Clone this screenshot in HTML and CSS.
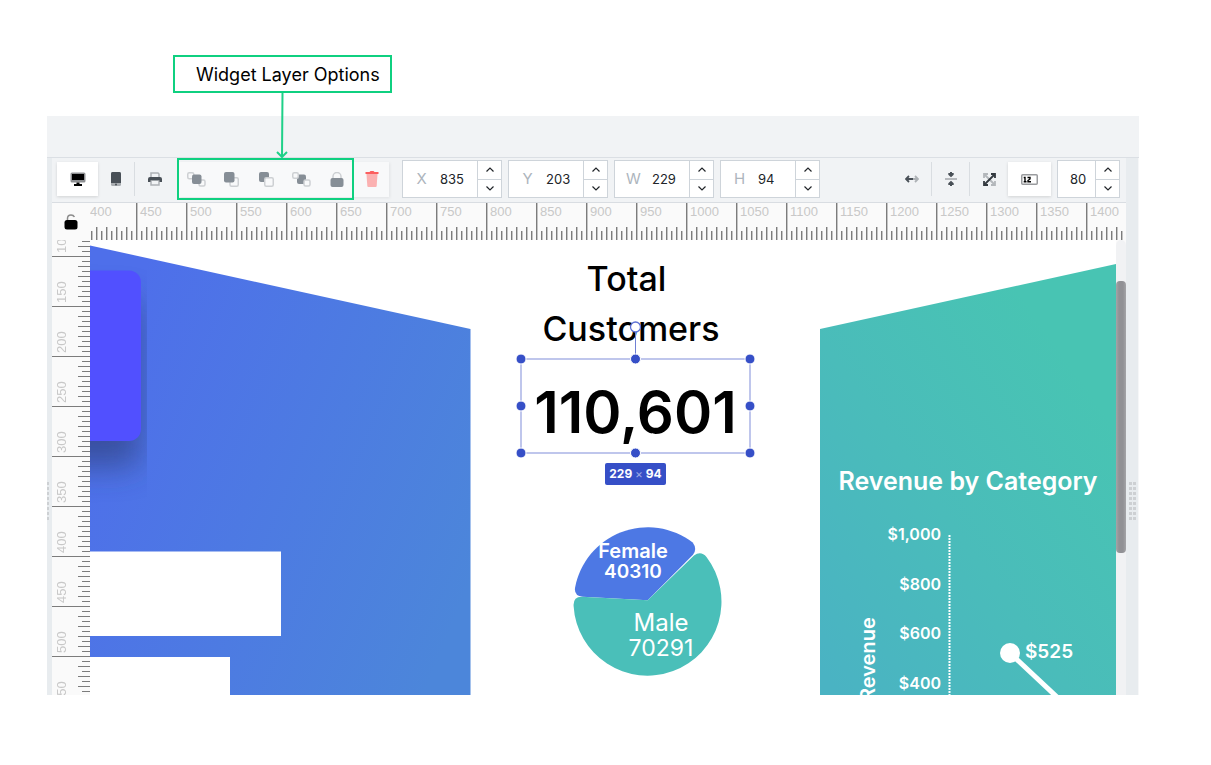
FILE: index.html
```html
<!DOCTYPE html>
<html lang="en">
<head>
<meta charset="utf-8">
<title>Dashboard designer</title>
<link rel="stylesheet" href="styles.css">
</head>
<body>
<header class="note"><p class="note-label">Widget Layer Options</p></header>
<main class="app">
  <svg class="note-arrow" width="12" height="65" viewBox="0 0 12 65" aria-hidden="true"><path d="M6.500 0 6 64M1 59l5 5 5-5"/></svg>
  <div class="band"></div>
  <div class="body">
    <div class="gutter gutter-left"><span class="grip"></span></div>
    <section class="editor">
      <div class="toolbar">
        <button class="tool active" aria-label="Desktop"><svg width="16" height="14" viewBox="0 0 16 14"><rect x=".5" y=".5" width="15" height="10" rx="1.500" fill="#8e9093"/><path d="M2 2h12v6H2zM6.500 10.500h3v1.500H12V14H4v-2h2.500z" fill="#000"/></svg></button>
        <button class="tool phone" aria-label="Phone"><svg width="10" height="14" viewBox="0 0 10 14"><rect width="10" height="14" rx="1.500" fill="#a9adb1"/><path d="M0 1.500Q0 0 1.500 0h7Q10 0 10 1.500V11H0z" fill="#495057"/><circle cx="5" cy="12.500" r="1" fill="#495057"/></svg></button>
        <span class="rule"></span>
        <button class="tool print" aria-label="Print"><svg width="14" height="14" viewBox="0 0 14 14"><path d="M3 5V1h7l1 1v3M3 9v4h8V9" fill="none" stroke="#adb1b5" stroke-width="1.500"/><path d="M2 5h10q2 0 2 2v3h-2.500V8.500h-9V10H0V7q0-2 2-2z" fill="#495057"/></svg></button>
        <div class="layers">
          <button aria-label="Bring to front"><svg width="19" height="15" viewBox="0 0 19 15"><rect class="o" x=".75" y=".75" width="6" height="6" rx="1.500"/><rect class="o" x="12" y="8" width="6" height="6" rx="1.500"/><rect class="s" x="5" y="2.500" width="9.500" height="9.500" rx="2"/></svg></button>
          <button aria-label="Bring forward"><svg width="15" height="15" viewBox="0 0 15 15"><rect class="o" x="6" y="5.750" width="8.250" height="8.500" rx="1.500"/><rect class="s" width="10.500" height="10.500" rx="2"/></svg></button>
          <button aria-label="Send backward"><svg width="15" height="15" viewBox="0 0 15 15"><rect class="s" width="10" height="10" rx="2"/><rect class="o f" x="5.750" y="5.750" width="8.500" height="8.500" rx="1.500"/></svg></button>
          <button aria-label="Send to back"><svg width="19" height="15" viewBox="0 0 19 15"><rect class="s" x="5" y="2.500" width="9" height="9.500" rx="2"/><rect class="o f" x=".75" y=".75" width="5.500" height="5.500" rx="1.500"/><rect class="o f" x="12" y="8" width="6" height="6" rx="1.500"/></svg></button>
          <button aria-label="Lock"><svg width="14" height="15" viewBox="0 0 14 15"><path class="o" d="M3 7V4.500a4 4 0 0 1 8 0V7"/><rect class="s" x=".5" y="6" width="13" height="9" rx="2"/></svg></button>
          <button aria-label="Delete"><svg width="14" height="16" viewBox="0 0 14 16"><path d="M1.500 3h11l-.8 12q-.1 1-1 1H3.300q-.9 0-1-1z" fill="#fbb1b1"/><path d="M.5 1h4l1-1h3l1 1h4v2H.5z" fill="#fb5f5f"/></svg></button>
          <span class="highlight"></span>
        </div>
        <div class="fields">
          <div class="field"><label for="fx">X</label><input id="fx" value="835"><span class="steps"><button aria-label="X up"><svg viewBox="0 0 8 5"><path d="M.5 4.500 4 1l3.500 3.500"/></svg></button><button aria-label="X down"><svg viewBox="0 0 8 5"><path d="M.5.500 4 4 7.500.500"/></svg></button></span></div>
          <div class="field"><label for="fy">Y</label><input id="fy" value="203"><span class="steps"><button aria-label="Y up"><svg viewBox="0 0 8 5"><path d="M.5 4.500 4 1l3.500 3.500"/></svg></button><button aria-label="Y down"><svg viewBox="0 0 8 5"><path d="M.5.500 4 4 7.500.500"/></svg></button></span></div>
          <div class="field"><label for="fw">W</label><input id="fw" value="229"><span class="steps"><button aria-label="Width up"><svg viewBox="0 0 8 5"><path d="M.5 4.500 4 1l3.500 3.500"/></svg></button><button aria-label="Width down"><svg viewBox="0 0 8 5"><path d="M.5.500 4 4 7.500.500"/></svg></button></span></div>
          <div class="field"><label for="fh">H</label><input id="fh" value="94"><span class="steps"><button aria-label="Height up"><svg viewBox="0 0 8 5"><path d="M.5 4.500 4 1l3.500 3.500"/></svg></button><button aria-label="Height down"><svg viewBox="0 0 8 5"><path d="M.5.500 4 4 7.500.500"/></svg></button></span></div>
        </div>
        <div class="view">
          <button class="tool" aria-label="Fit width"><svg width="14" height="8" viewBox="0 0 14 8" fill="none" stroke-width="1.800"><path d="M7 4h6M10 1l3 3-3 3" stroke="#adb1b5"/><path d="M8 4H1M4 1 1 4l3 3" stroke="#495057"/></svg></button>
          <span class="rule"></span>
          <button class="tool narrow" aria-label="Fit height"><svg width="12" height="14" viewBox="0 0 12 14"><path d="M0 7h12" stroke="#a2a6aa" stroke-width="1.500"/><path d="M5 0h2v1h1.700v1.700L6 5.200 3.300 2.700V1H5zM5 14h2v-1h1.700v-1.700L6 8.800l-2.700 2.500V13H5z" fill="#495057"/></svg></button>
          <span class="rule"></span>
          <button class="tool" aria-label="Fit page"><svg width="13" height="13" viewBox="0 0 13 13" fill="none" stroke-width="1.800"><path d="M1 5V1h4M1 1l11 11M12 8v4H8" stroke="#b3b7bb"/><path d="M8 1h4v4M12 1 1 12M1 8v4h4" stroke="#343a40"/></svg></button>
          <button class="tool active" aria-label="Rulers"><svg width="17" height="11" viewBox="0 0 17 11"><rect x=".75" y=".75" width="15.500" height="9.500" rx="1" fill="#fff" stroke="#999b9e" stroke-width="1.500"/><path d="M2.700 3.500H4V8M2.700 7.800h2.800M6.500 3.500h2.500v1.500L7 6.500v1.300h3" fill="none" stroke="#000" stroke-width="1.400"/></svg></button>
          <div class="field zoom"><input id="fz" value="80" aria-label="Zoom"><span class="steps"><button aria-label="Zoom in"><svg viewBox="0 0 8 5"><path d="M.5 4.500 4 1l3.500 3.500"/></svg></button><button aria-label="Zoom out"><svg viewBox="0 0 8 5"><path d="M.5.500 4 4 7.500.500"/></svg></button></span></div>
        </div>
      </div>
      <div class="workspace">
        <button class="corner" aria-label="Lock guides"><svg width="14" height="16" viewBox="0 0 14 16"><path d="M3.500 7V4.500q0-3.500 3.500-3.500 2.500 0 3.400 2" fill="none" stroke="#8c8c8c" stroke-width="1.500"/><rect x=".5" y="6" width="13" height="9.500" rx="2.500"/></svg></button>
        <div class="ruler-x"><span>400</span><span>450</span><span>500</span><span>550</span><span>600</span><span>650</span><span>700</span><span>750</span><span>800</span><span>850</span><span>900</span><span>950</span><span>1000</span><span>1050</span><span>1100</span><span>1150</span><span>1200</span><span>1250</span><span>1300</span><span>1350</span><span>1400</span></div>
        <div class="ruler-y"><span>100</span><span>150</span><span>200</span><span>250</span><span>300</span><span>350</span><span>400</span><span>450</span><span>500</span><span>550</span></div>
        <div class="stage">
          <svg class="art" width="1026" height="455" viewBox="90 240 1026 455">
            <defs>
              <linearGradient id="blue" gradientUnits="userSpaceOnUse" x1="90" y1="400" x2="480" y2="560"><stop offset="0" stop-color="#4e6fea"/><stop offset="1" stop-color="#4c86da"/></linearGradient>
              <linearGradient id="teal" gradientUnits="userSpaceOnUse" x1="800" y1="640" x2="1110" y2="420"><stop offset="0" stop-color="#4ab3c3"/><stop offset=".5" stop-color="#4abcba"/><stop offset="1" stop-color="#48c4b3"/></linearGradient>
              <filter id="soft" x="-50%" y="-30%" width="200%" height="170%"><feGaussianBlur stdDeviation="16"/></filter>
              <clipPath id="card"><path d="M90 262h57v270H90z"/></clipPath>
            </defs>
            <path fill="url(#blue)" d="M90 245.500 470.500 329v366H90z"/>
            <path fill="url(#teal)" d="M820 329 1116 264v431H820z"/>
            <g clip-path="url(#card)"><rect x="40" y="300" width="100" height="167" rx="12" fill="#2c3a70" opacity=".6" filter="url(#soft)"/><rect x="40" y="270.500" width="101" height="170.500" rx="12" fill="#5150ff"/></g>
            <path fill="#fff" d="M90 551.500h191V636H90zM90 657h140v38H90z"/>
            <path fill="#4d78e4" d="M647.700 600.300 693 554.800q4.500-6-.3-12.400A74 74 0 0 0 575 588q-1 8 7.700 8.800z"/>
            <path fill="#4abfb9" d="M647.700 600.300 694 555.500q7-5 12.500 1.500A74 74 0 1 1 573.600 606q-.6-9 8-9.200z"/>
            <g class="chart-text">
              <g class="semi" text-anchor="middle"><text x="633" y="558" font-size="20">Female</text><text x="633" y="578" font-size="19">40310</text></g>
              <g text-anchor="middle"><text x="661" y="631" font-size="24">Male</text><text x="661" y="656" font-size="23">70291</text></g>
              <text class="semi" x="968" y="490" font-size="25" text-anchor="middle">Revenue by Category</text>
              <g class="semi" font-size="16" text-anchor="end"><text x="941" y="540">$1,000</text><text x="941" y="590">$800</text><text x="941" y="639">$600</text><text x="941" y="689">$400</text></g>
              <text class="semi" font-size="20" transform="translate(875 701) rotate(-90)">Revenue</text>
              <text class="semi" x="1025" y="658" font-size="19">$525</text>
            </g>
            <path d="M949.500 535v160" stroke="#fff" stroke-width="2" stroke-dasharray="2 1"/>
            <path d="M1010 653 1058 698" stroke="#fff" stroke-width="5"/><circle cx="1010" cy="653" r="10" fill="#fff"/>
          </svg>
          <h1 class="title">Total&nbsp;<br>Customers</h1>
          <div class="selection">
            <strong class="value">110,601</strong>
            <svg class="handles" width="241" height="139" viewBox="515 320 241 139" aria-hidden="true">
              <path d="M521 359h229v94H521z" fill="none" stroke="#aab4e6" stroke-width="1.500"/>
              <path d="M635.500 332v27" stroke="#6f80d4"/>
              <circle cx="635.500" cy="327" r="5" fill="#fff" stroke="#5b6fd6" stroke-width="1.300"/>
              <g fill="#364fc7" stroke="#fff"><circle cx="521" cy="359" r="5"/><circle cx="635.500" cy="359" r="5"/><circle cx="750" cy="359" r="5"/><circle cx="521" cy="406" r="5"/><circle cx="750" cy="406" r="5"/><circle cx="521" cy="453" r="5"/><circle cx="635.500" cy="453" r="5"/><circle cx="750" cy="453" r="5"/></g>
            </svg>
            <span class="size">229 <i>×</i> 94</span>
          </div>
        </div>
        <div class="scroll"><span class="thumb"></span></div>
      </div>
    </section>
    <div class="gutter gutter-right"><span class="grip"></span></div>
  </div>
</main>
</body>
</html>
```
FILE: styles.css
```css
* { box-sizing: border-box; }
body { margin: 0; background: #fff; font-family: Inter, "Liberation Sans", sans-serif; }
button { border: 0; padding: 0; background: none; display: flex; align-items: center; justify-content: center; }
svg { display: block; }

.note { padding: 55px 0 23px 173px; }
.note-label { margin: 0; width: 219px; height: 38px; padding-left: 21px; border: 2px solid #0fd080; font-size: 18px; line-height: 35px; white-space: nowrap; }
.note-arrow { position: absolute; left: 229px; top: -23px; z-index: 2; fill: none; stroke: #1fd088; stroke-width: 2; }

.app { position: relative; margin: 0 72px 0 47px; background: #f1f3f5; }
.band { height: 42px; border-bottom: 1px solid #dbdfe4; }
.body { display: flex; }
.gutter { background: #e8ecef; display: flex; align-items: center; padding-top: 149px; }
.gutter-left { width: 5px; }
.gutter-right { width: 13px; border-right: 1px solid #f6f7f8; justify-content: center; }
.grip { width: 7px; height: 39px; background: conic-gradient(from 270deg at 3px 3px, #cdd0d3 90deg, transparent 0) 0 0 / 4px 5px; }
.gutter-left .grip { width: 2px; }
.editor { flex: 1; min-width: 0; }

.toolbar { display: flex; align-items: center; height: 45px; padding: 0 6px 2px 5px; border-bottom: 1px solid #d9dde2; }
.tool { width: 38px; height: 34px; }
.tool.active { width: 41px; background: #fff; box-shadow: 0 1px 3px #0002; }
.tool.phone { width: 36px; }
.tool.print { width: 39px; }
.tool.narrow { width: 37px; }
.rule { width: 1px; height: 34px; background: #d9dde1; }
.layers { position: relative; display: flex; height: 35px; margin-left: 5px; background: #f8f9fa; box-shadow: 1px 1px 3px #0001; }
.layers button { width: 35px; }
.layers .o { fill: none; stroke: #cdd0d3; stroke-width: 1.5px; }
.layers .o.f { fill: #f8f9fa; }
.layers .s { fill: #868e96; }
.highlight { position: absolute; left: -2px; top: -4px; width: 177px; height: 42px; border: 2px solid #0fd080; pointer-events: none; }

.fields { display: flex; gap: 6px; margin-left: 13px; }
.field { display: flex; width: 100px; height: 38px; border: 1px solid #ced4da; background: #fff; }
.field label { width: 37px; text-align: center; font-size: 15px; line-height: 36px; color: #adb5bd; }
.field input { flex: 1; width: 0; min-width: 0; border: 0; padding: 0; font: 13px Inter, sans-serif; color: #212529; background: none; }
.steps { width: 24px; display: flex; flex-direction: column; border-left: 1px solid #ced4da; }
.steps button { flex: 1; }
.steps button + button { border-top: 1px solid #ced4da; }
.steps svg { width: 8px; height: 5px; fill: none; stroke: #212529; stroke-width: 1.2px; }
.view { display: flex; align-items: center; margin-left: auto; }
.field.zoom { width: 63px; margin-left: 6px; }
.field.zoom input { padding-left: 12px; }
.view .active { width: 43px; }

.workspace { display: grid; grid-template-columns: 38px 1fr 10px; grid-template-rows: 37px minmax(455px, auto); background: #fafafa; color: #c8c8c8; font: 13px "Liberation Sans", Arial, sans-serif; }
.ruler-x { grid-column: 2 / 4; display: flex; overflow: hidden; background:
  linear-gradient(90deg, #7c7c7c 1px, #c4c4c4 1px 2px, transparent 2px) -4px 0 / 50px 100% repeat-x,
  linear-gradient(90deg, #7c7c7c 1px, #c4c4c4 1px 2px, transparent 2px) -4px 100% / 10px 13px repeat-x,
  linear-gradient(90deg, #7c7c7c 1px, #c4c4c4 1px 2px, transparent 2px) -4px 100% / 5px 9px repeat-x; }
.ruler-x span { flex: 0 0 50px; line-height: 17px; }
.ruler-y { height: 455px; display: flex; flex-direction: column; overflow: hidden; background:
  linear-gradient(#7c7c7c 1px, transparent 1px) 0 16px / 100% 50px repeat-y,
  linear-gradient(#7c7c7c 1px, transparent 1px) 100% 6px / 12px 10px repeat-y,
  linear-gradient(#7c7c7c 1px, transparent 1px) 100% 1px / 8px 5px repeat-y; }
.ruler-y span { flex: 0 0 50px; width: 20px; writing-mode: vertical-rl; transform: rotate(180deg); line-height: 20px; padding-top: 3px; }
.ruler-y span:first-child { margin-top: -34px; }

.stage { position: relative; overflow: hidden; background: #fff; color: #000; font-family: Inter, sans-serif; }
.art { position: absolute; left: 0; top: 0; }
.chart-text { fill: #fff; }
.semi { font-weight: 600; }
.title { position: absolute; left: 426px; top: 14px; width: 230px; margin: 0; text-align: center; font-size: 34px; line-height: 50px; font-weight: 500; }
.selection { position: absolute; left: 431px; top: 119px; width: 229px; height: 94px; }
.value { display: block; text-align: center; font-size: 58px; line-height: 106px; font-weight: 600; }
.handles { position: absolute; left: -6px; top: -39px; }
.size { position: absolute; left: 84px; top: 104px; width: 61px; border-radius: 2px; background: #364fc7; color: #fff; text-align: center; font-size: 12px; line-height: 22px; font-weight: 700; white-space: nowrap; }
.size i { font-style: normal; font-weight: 400; color: #9ba8e4; }
.scroll { padding-top: 41px; background: #f1f2f4; border-radius: 5px 5px 0 0; }
.thumb { display: block; height: 272px; border-radius: 4px; background: linear-gradient(90deg, #a5a5a8, #919195 3px, #919195 7px, #a5a5a8); }
```
